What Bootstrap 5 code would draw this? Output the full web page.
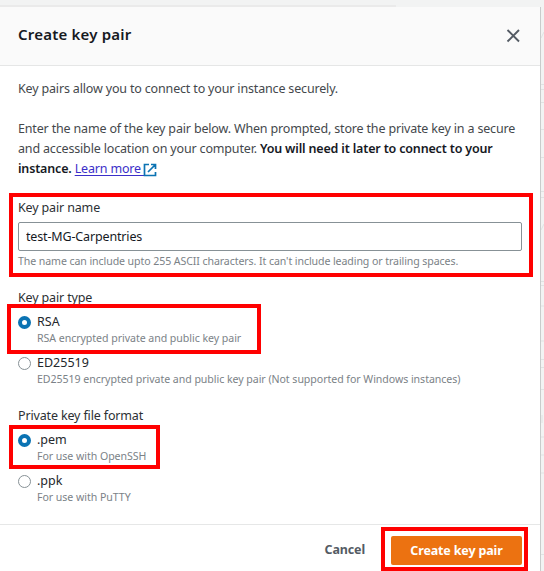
<!DOCTYPE html>
<html lang="en">
<head>
<meta charset="utf-8">
<meta name="viewport" content="width=device-width, initial-scale=1">
<title>Create key pair</title>
<link href="https://cdn.jsdelivr.net/npm/bootstrap@5.3.0/dist/css/bootstrap.min.css" rel="stylesheet">
<style>
body{width:544px;height:571px;overflow:hidden;background:#f2f3f3;font-family:"Noto Sans","Open Sans",sans-serif;font-size:12.5px;line-height:20px;color:#44484c}
.backdrop-top{height:7px;width:396px;border-bottom:2px solid #eaeaea}
.backdrop-side{right:0;top:0}
.dialog-panel{width:541px;height:564px;background:#fff;border-right:1px solid #c9cccc}
.dialog-head{height:59px;background:#fafafa;border-bottom:1px solid #e5e6e6;padding:0 19px 4px 18px}
.dialog-title{font-size:15px;font-weight:600;color:#16191f;line-height:20px;letter-spacing:.2px}
.dialog-body{height:458px;padding:13px 18px 0}
.dialog-foot{height:47px;border-top:1px solid #e6e7e7;padding:11px 18px 0 0}
.copy{letter-spacing:-.165px}
.copy p{margin:0 0 20px;white-space:nowrap}
.copy p:last-child{margin-bottom:19px}
.copy b{font-weight:600;color:#16191f}
.copy a{color:#3b2fc9;text-decoration:underline;text-underline-offset:2px}
.copy svg{margin-left:-1px}
.field-label{color:#2c3034;line-height:20px;white-space:nowrap;letter-spacing:-.15px}
.name-input{height:29px;border:1px solid #879196;border-radius:2px;padding:0 7px;font-size:12.5px;color:#16191f;margin-top:4px;letter-spacing:-.15px}
.hint{font-size:10.6px;line-height:16px;color:#7b8287;white-space:nowrap;letter-spacing:-.07px}
.name-hint{margin:2px 0 19px;letter-spacing:-.09px}
.choice{height:41px}
.choice .form-check-input{width:13px;height:13px;margin:3px 6px 0 0;border:1px solid #879196;flex:none}
.choice .form-check-input:checked{background:#fff;border:4px solid #0b73b3}
.choice-name{line-height:17px;color:#24282c}
.choice .hint{letter-spacing:-.05px}
.type-choices{padding-top:5px}
.format-label{margin-top:11px}
.btn-key{width:131px;height:29px;background:#ec7211;color:#fff;border:0;border-radius:2px;padding:0;font-size:12.5px;font-weight:700;line-height:26px;letter-spacing:-.15px}
.btn-cancel{border:0;padding:0;font-size:12.5px;font-weight:700;color:#545b64;line-height:27px;margin-right:26px;letter-spacing:-.15px}
.outline-box{border:4px solid #f00}
.mark-name{left:9px;top:193px;width:524px;height:84px}
.mark-rsa{left:7px;top:304px;width:254px;height:50px}
.mark-pem{left:9px;top:425px;width:151px;height:44px}
.mark-create{left:381px;top:527px;width:147px;height:44px}
</style>
<script src="https://cdn.jsdelivr.net/npm/bootstrap@5.3.0/dist/js/bootstrap.bundle.min.js"></script>
</head>
<body class="position-relative">
<div class="backdrop-top"></div>
<svg class="backdrop-side position-absolute" width="3" height="571" fill="none" stroke="#e0e3e3"><path d="M0 38l3-6M0 84.500h3M0 89.500h3M0 102.500h3M0 129.500h3M0 157.500h3M0 191.500h3M0 197.500h3M0 230l3-6M0 281.500h3M0 285.500h3M0 306h3M0 341h3M0 359.500h3M0 367.500h3M0 389.500h3M1 415v8M0 437h3M0 455h3M0 473h3M0 554.500h3"/></svg>
<main class="dialog-panel d-flex flex-column">
  <header class="dialog-head d-flex align-items-center justify-content-between">
    <h1 class="dialog-title m-0">Create key pair</h1>
    <svg width="16" height="16" viewBox="0 0 16 16" fill="none" stroke="#545b64" stroke-width="1.900" class="mt-1"><path d="M2.500 2l11.500 11.500M14 2l-11.500 11.500"/></svg>
  </header>
  <section class="dialog-body">
    <div class="copy">
      <p>Key pairs allow you to connect to your instance securely.</p>
      <p>Enter the name of the key pair below. When prompted, store the private key in a secure<br>and accessible location on your computer. <b>You will need it later to connect to your</b><br><b>instance.</b> <a href="#">Learn more </a><svg width="14" height="14" viewBox="0 0 14 14" fill="none" stroke="#0b73b3" stroke-width="1.700"><path d="M6 1.500H1.500V12.500H12.500V9M8 1.500h4.500V6M12.500 1.500L5 9"/></svg></p>
    </div>
    <label class="field-label d-block" for="keyname">Key pair name</label>
    <input id="keyname" class="name-input w-100 d-block" type="text" value="test-MG-Carpentries">
    <div class="hint name-hint">The name can include upto 255 ASCII characters. It can't include leading or trailing spaces.</div>
    <div class="field-label">Key pair type</div>
    <div class="type-choices">
      <div class="choice d-flex"><input class="form-check-input" type="radio" name="type" id="rsa" checked><label for="rsa"><span class="choice-name d-block">RSA</span><span class="hint d-block">RSA encrypted private and public key pair</span></label></div>
      <div class="choice d-flex"><input class="form-check-input" type="radio" name="type" id="ed"><label for="ed"><span class="choice-name d-block">ED25519</span><span class="hint d-block">ED25519 encrypted private and public key pair (Not supported for Windows instances)</span></label></div>
    </div>
    <div class="field-label format-label">Private key file format</div>
    <div class="type-choices">
      <div class="choice d-flex"><input class="form-check-input" type="radio" name="format" id="pem" checked><label for="pem"><span class="choice-name d-block">.pem</span><span class="hint d-block">For use with OpenSSH</span></label></div>
      <div class="choice d-flex"><input class="form-check-input" type="radio" name="format" id="ppk"><label for="ppk"><span class="choice-name d-block">.ppk</span><span class="hint d-block">For use with PuTTY</span></label></div>
    </div>
  </section>
  <footer class="dialog-foot d-flex justify-content-end align-items-start">
    <button class="btn btn-cancel" type="button">Cancel</button>
    <button class="btn btn-key" type="button">Create key pair</button>
  </footer>
</main>
<div class="outline-box mark-name position-absolute pe-none"></div>
<div class="outline-box mark-rsa position-absolute pe-none"></div>
<div class="outline-box mark-pem position-absolute pe-none"></div>
<div class="outline-box mark-create position-absolute pe-none"></div>
</body>
</html>
